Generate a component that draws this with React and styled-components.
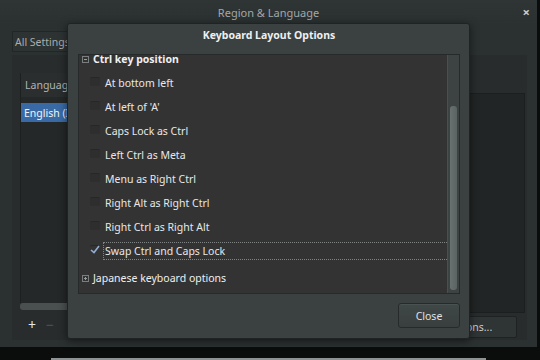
import React from "react";
import styled, { createGlobalStyle } from "styled-components";

const Global = createGlobalStyle`
  html, body { margin: 0; padding: 0; background: #0b0c0c; }
  body { font-family: "Noto Sans", "DejaVu Sans", sans-serif; }
`;

const Screen = styled.div`
  position: relative;
  width: 540px;
  height: 360px;
  overflow: hidden;
  background: #0b0c0c;
  display: flex;
  flex-direction: column;
`;

const Window = styled.div`
  width: 537px;
  height: 347px;
  background: #2b3030;
  border-radius: 4px 4px 0 0;
  display: flex;
  flex-direction: column;
  box-sizing: border-box;
`;

const TitleBar = styled.div`
  height: 24px;
  display: flex;
  align-items: center;
  justify-content: center;
  position: relative;
  color: #a3a8a8;
  font-size: 11px;
  background: linear-gradient(#2f3535, #2b3030);
`;

const CloseX = styled.span`
  position: absolute;
  right: 7px;
  top: 3px;
  color: #c8cccc;
  font-size: 13px;
  font-weight: bold;
`;

const Body = styled.div`
  flex: 1;
  display: flex;
  flex-direction: column;
  padding: 7px 10px 7px 12px;
  gap: 3px;
`;

const Toolbar = styled.div`
  display: flex;
  height: 21px;
`;

const FlatButton = styled.div`
  width: 90px;
  height: 21px;
  box-sizing: border-box;
  border: 1px solid #222626;
  background: #2d3232;
  color: #a9adad;
  font-size: 10.5px;
  display: flex;
  align-items: center;
  padding-left: 2px;
`;

const Frame = styled.div`
  flex: 1;
  background: #282c2c;
  display: flex;
  justify-content: space-between;
  padding: 18px 2px 2px 8px;
`;

const LeftCol = styled.div`
  width: 200px;
  display: flex;
  flex-direction: column;
`;

const LangList = styled.div`
  flex: 1;
  background: #252828;
  border-left: 1px solid #1d2020;
  display: flex;
  flex-direction: column;
`;

const LangHeader = styled.div`
  height: 24px;
  display: flex;
  align-items: center;
  padding-left: 4px;
  color: #b0b4b4;
  font-size: 10.5px;
  background: #2a2e2e;
`;

const LangRow = styled.div`
  margin-top: 6px;
  height: 19px;
  display: flex;
  align-items: center;
  padding-left: 3px;
  color: #f0f3f6;
  font-size: 10.5px;
  background: ${(p) => (p.$selected ? "#3a6aa6" : "transparent")};
`;

const HScroll = styled.div`
  height: 7px;
  background: #4a5050;
  border-radius: 3px;
`;

const ListTools = styled.div`
  height: 28px;
  display: flex;
  align-items: center;
  gap: 10px;
  padding-left: 8px;
  font-size: 14px;
`;

const Tool = styled.span`
  color: ${(p) => (p.$dim ? "#4e5454" : "#e6e8e8")};
`;

const RightCol = styled.div`
  width: 200px;
  display: flex;
  flex-direction: column;
  align-items: flex-end;
  padding-top: 20px;
`;

const DarkBox = styled.div`
  flex: 1;
  align-self: stretch;
  background: #222525;
  border: 1px solid #1c1f1f;
  margin-bottom: 3px;
`;

const OptButton = styled.div`
  width: 97px;
  height: 22px;
  margin-right: 8px;
  box-sizing: border-box;
  border: 1px solid #1e2222;
  border-radius: 2px;
  background: #2f3434;
  color: #c8cccc;
  font-size: 10.5px;
  display: flex;
  align-items: center;
  justify-content: center;
`;

const BottomStrip = styled.div`
  margin: 11px 54px 0 51px;
  height: 2px;
  background: #8e9292;
`;

/* modal dialog over the window */
const Dialog = styled.div`
  position: absolute;
  left: 67px;
  top: 23px;
  width: 403px;
  height: 316px;
  box-sizing: border-box;
  background: #3b4141;
  border: 1px solid #1f2323;
  border-radius: 3px;
  box-shadow: 0 2px 8px rgba(0, 0, 0, 0.5);
  display: flex;
  flex-direction: column;
  padding: 0 9px 10px 10px;
`;

const DialogTitle = styled.div`
  height: 22px;
  display: flex;
  align-items: center;
  justify-content: center;
  color: #eef0f0;
  font-size: 10.5px;
  font-weight: bold;
  margin-bottom: 8px;
`;

const OptionsFrame = styled.div`
  height: 240px;
  display: flex;
  background: #333333;
  border: 1px solid #272a2a;
  box-sizing: border-box;
`;

const Scroller = styled.div`
  flex: 1;
  overflow: hidden;
`;

const Content = styled.div`
  margin-top: -8px;
`;

const GroupRow = styled.div`
  height: 24px;
  display: flex;
  align-items: center;
  padding-left: 3px;
  margin-top: ${(p) => (p.$gap ? "3px" : "0")};
  color: #f0f0f0;
  font-size: 10.5px;
  font-weight: ${(p) => (p.$bold ? "bold" : "normal")};
`;

const Expander = styled.span`
  width: 7px;
  height: 7px;
  box-sizing: border-box;
  border: 1px solid #7a7e7e;
  margin-right: 4px;
  position: relative;
  &::before {
    content: "";
    position: absolute;
    left: 1px;
    right: 1px;
    top: 2px;
    height: 1px;
    background: #9a9e9e;
  }
  ${(p) =>
    p.$closed &&
    `
    &::after {
      content: "";
      position: absolute;
      top: 1px;
      bottom: 1px;
      left: 2px;
      width: 1px;
      background: #9a9e9e;
    }
  `}
`;

const ItemRow = styled.div`
  height: 24px;
  display: flex;
  align-items: center;
  padding-left: 11px;
  color: #e8e8e8;
  font-size: 10.5px;
`;

const Check = styled.span`
  width: 10px;
  height: 9px;
  margin-right: 3px;
  margin-top: -4px;
  box-sizing: border-box;
  border-top: 1px solid #272727;
  border-radius: 2px;
  background: ${(p) => (p.$on ? "transparent" : "#2e2e2e")};
  display: flex;
  align-items: center;
  justify-content: center;
`;

const Label = styled.span`
  flex: 1;
  height: 18px;
  display: flex;
  align-items: center;
  box-sizing: border-box;
  padding-left: 1px;
  border: 1px dotted ${(p) => (p.$focus ? "#7f8383" : "transparent")};
  border-right: none;
`;

const Scrollbar = styled.div`
  width: 12px;
  background: #3d4343;
  border-left: 1px solid #4a5050;
  box-sizing: border-box;
  padding: 51px 2px 3px 2px;
  display: flex;
`;

const Thumb = styled.div`
  flex: 1;
  border-radius: 3px;
  background: linear-gradient(90deg, #687070, #5a6262);
`;

const ButtonRow = styled.div`
  margin-top: 9px;
  display: flex;
  justify-content: flex-end;
`;

const CloseButton = styled.div`
  width: 62px;
  height: 25px;
  box-sizing: border-box;
  border: 1px solid #262a2a;
  border-radius: 3px;
  background: linear-gradient(#404747, #393f3f);
  box-shadow: inset 0 1px 0 #4a5151;
  color: #e0e2e2;
  font-size: 10.5px;
  display: flex;
  align-items: center;
  justify-content: center;
`;

const ctrlOptions = [
  "At bottom left",
  "At left of 'A'",
  "Caps Lock as Ctrl",
  "Left Ctrl as Meta",
  "Menu as Right Ctrl",
  "Right Alt as Right Ctrl",
  "Right Ctrl as Right Alt",
  "Swap Ctrl and Caps Lock",
];

const Tick = () => (
  <svg width="10" height="9" viewBox="0 0 10 9" style={{ flexShrink: 0 }}>
    <path d="M1 5 L4 7.5 L9 1" fill="none" stroke="#93aed4" strokeWidth="1.6" />
  </svg>
);

export default function App() {
  return (
    <>
      <Global />
      <Screen>
        <Window>
          <TitleBar>
            Region &amp; Language
            <CloseX>×</CloseX>
          </TitleBar>
          <Body>
            <Toolbar>
              <FlatButton>All Settings</FlatButton>
            </Toolbar>
            <Frame>
              <LeftCol>
                <LangList>
                  <LangHeader>Language</LangHeader>
                  <LangRow $selected>English (India)</LangRow>
                </LangList>
                <HScroll />
                <ListTools>
                  <Tool>+</Tool>
                  <Tool $dim>−</Tool>
                </ListTools>
              </LeftCol>
              <RightCol>
                <DarkBox />
                <OptButton>Options...</OptButton>
              </RightCol>
            </Frame>
          </Body>
        </Window>
        <BottomStrip />

        <Dialog>
          <DialogTitle>Keyboard Layout Options</DialogTitle>
          <OptionsFrame>
            <Scroller>
              <Content>
                <GroupRow $bold>
                  <Expander />
                  Ctrl key position
                </GroupRow>
                {ctrlOptions.map((opt, i) => {
                  const on = i === ctrlOptions.length - 1;
                  return (
                    <ItemRow key={opt}>
                      <Check $on={on}>{on && <Tick />}</Check>
                      <Label $focus={on}>{opt}</Label>
                    </ItemRow>
                  );
                })}
                <GroupRow $gap>
                  <Expander $closed />
                  Japanese keyboard options
                </GroupRow>
              </Content>
            </Scroller>
            <Scrollbar>
              <Thumb />
            </Scrollbar>
          </OptionsFrame>
          <ButtonRow>
            <CloseButton>Close</CloseButton>
          </ButtonRow>
        </Dialog>
      </Screen>
    </>
  );
}
